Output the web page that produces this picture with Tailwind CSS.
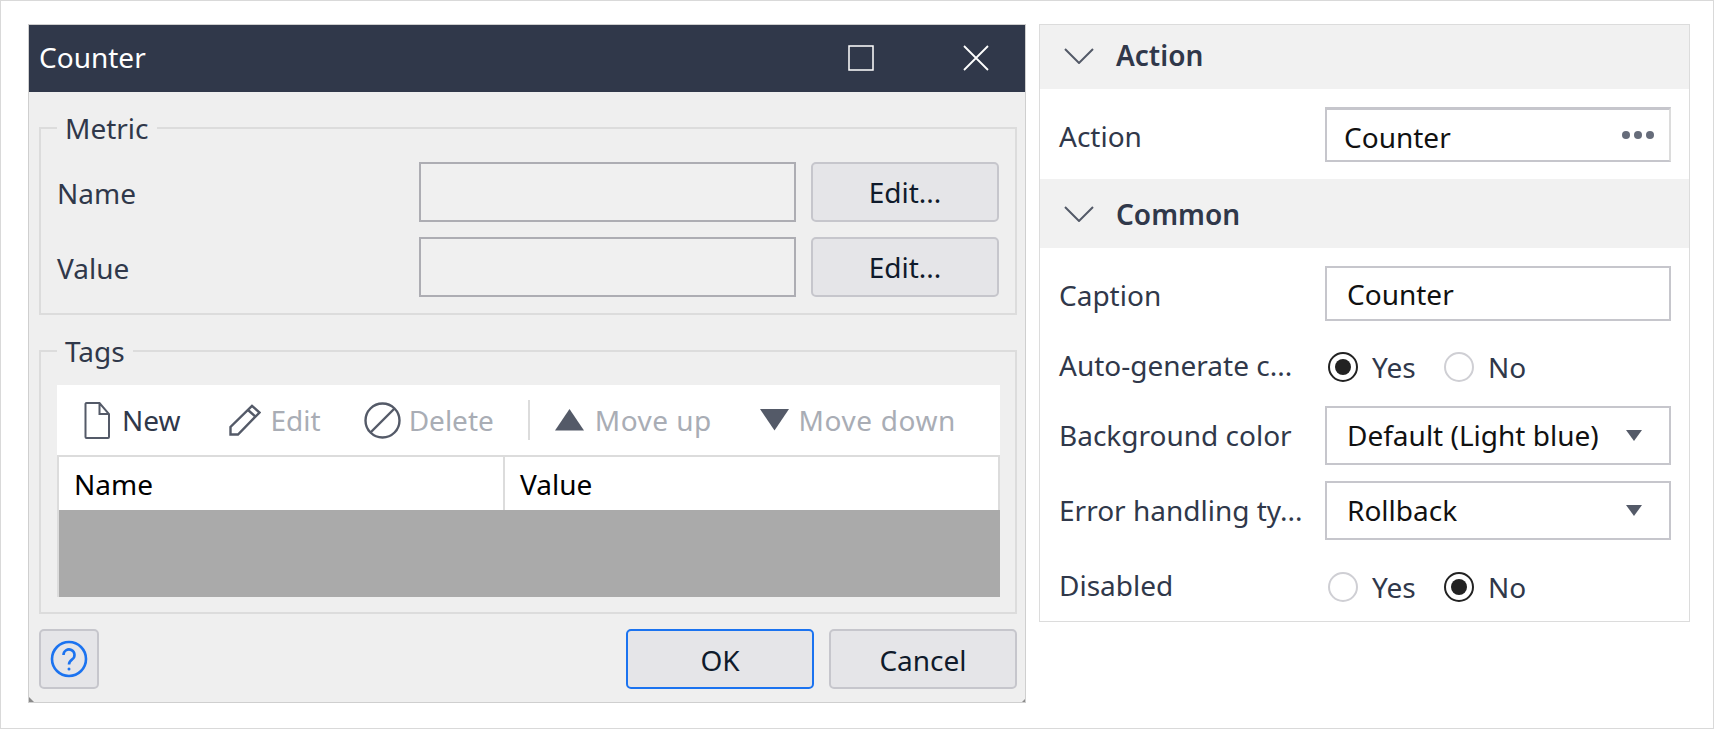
<!DOCTYPE html>
<html lang="en">
<head>
    <meta charset="UTF-8">
    <title>Counter</title>
    <script src="https://cdn.jsdelivr.net/npm/@tailwindcss/browser@4"></script>
</head>
<body class="bg-white">
<div class="w-[1714px] h-[729px] overflow-hidden border border-[#d9d9d9] bg-white flex items-start gap-[13px] pl-[27px] pt-[23px] font-['Noto_Sans',sans-serif] text-[28px] text-[#30384a] leading-[38px]">

    <!-- dialog -->
    <div class="relative w-[998px] h-[679px] shrink-0 border border-[#cfcfcf] bg-[#efefef] flex flex-col">
        <div class="h-[67px] shrink-0 bg-[#30384a] text-white flex items-center pl-[10px]">
            <span class="flex-1 pb-[4px]">Counter</span>
            <svg class="mr-[89px] mb-[2px]" width="26" height="26" viewBox="0 0 26 26" fill="none" stroke="#fff" stroke-width="1.5"><rect x="1" y="1" width="24" height="24"/></svg>
            <svg class="mr-[36px] mb-[2px]" width="26" height="26" viewBox="0 0 26 26" fill="none" stroke="#fff" stroke-width="1.8"><path d="M1 1l24 24M25 1L1 25"/></svg>
        </div>

        <div class="flex-1 flex flex-col pl-[10px] pr-[8px] pt-[17px]">
            <fieldset class="h-[206px] border-2 border-[#dcdcdc] pl-[16px] pr-[16px]">
                <legend class="px-[8px] leading-[38px]">Metric</legend>
                <div class="flex flex-col gap-[15px] pt-[15px]">
                    <div class="flex items-center h-[60px]">
                        <span class="w-[362px] pt-[2px]">Name</span>
                        <div class="w-[377px] h-[60px] border-2 border-[#adadb3] bg-[#f0f0f0]"></div>
                        <button class="ml-[15px] w-[188px] h-[60px] rounded-[5px] border-2 border-[#c6c6cc] bg-[#e5e5e8] text-[#0f1a2b]">Edit...</button>
                    </div>
                    <div class="flex items-center h-[60px]">
                        <span class="w-[362px] pt-[2px]">Value</span>
                        <div class="w-[377px] h-[60px] border-2 border-[#adadb3] bg-[#f0f0f0]"></div>
                        <button class="ml-[15px] w-[188px] h-[60px] rounded-[5px] border-2 border-[#c6c6cc] bg-[#e5e5e8] text-[#0f1a2b]">Edit...</button>
                    </div>
                </div>
            </fieldset>

            <fieldset class="mt-[17px] h-[282px] border-2 border-[#dcdcdc] pl-[16px] pr-[15px]">
                <legend class="px-[8px] leading-[38px]">Tags</legend>
                <div class="mt-[15px]">
                    <div class="h-[70px] bg-white flex items-center pl-[27px] text-[#a9adb5]">
                        <svg width="26" height="37" viewBox="0 0 26 37" fill="none" stroke="#545a68" stroke-width="2"><path d="M2.5 1h13l9.5 11v23a1 1 0 0 1-1 1H2.500a1 1 0 0 1-1-1V2a1 1 0 0 1 1-1zM15.500 1v11H25"/></svg>
                        <span class="ml-[12px] text-[#30384a]">New</span>
                        <svg class="ml-[48px]" width="32" height="32" viewBox="0 0 32 32" fill="none" stroke="#545a68" stroke-width="2.400"><path d="M1.500 30.500v-7.500L23 1.800l7.500 6.700L9 30.500zM19 6l8 7"/></svg>
                        <span class="ml-[10px]">Edit</span>
                        <svg class="ml-[43px]" width="37" height="37" viewBox="0 0 37 37" fill="none" stroke="#545a68" stroke-width="2.400"><circle cx="18.500" cy="18.500" r="17"/><path d="M6.500 30.500l24-24"/></svg>
                        <span class="ml-[8px]">Delete</span>
                        <div class="ml-[34px] w-[2px] h-[40px] bg-[#dcdcdc]"></div>
                        <svg class="ml-[25px]" width="29" height="22" viewBox="0 0 29 22" fill="#545a68"><path d="M14.500 0L29 21.500H0z"/></svg>
                        <span class="ml-[11px] tracking-[0.45px]">Move up</span>
                        <svg class="ml-[48px]" width="29" height="22" viewBox="0 0 29 22" fill="#545a68"><path d="M0 0h29L14.500 21.500z"/></svg>
                        <span class="ml-[10px] tracking-[0.6px]">Move down</span>
                    </div>
                    <div class="border-t-2 border-[#dcdcdc] h-[142px] flex flex-col">
                        <div class="h-[53px] bg-white border-x-2 border-[#dcdcdc] flex items-center text-black">
                            <span class="w-[446px] h-full flex items-center pl-[15px] border-r-2 border-[#dcdcdc]">Name</span>
                            <span class="pl-[15px]">Value</span>
                        </div>
                        <div class="flex-1 bg-[#aaaaaa] border-l-2 border-[#dcdcdc]"></div>
                    </div>
                </div>
            </fieldset>

            <div class="mt-[15px] flex items-center justify-between">
                <button class="w-[60px] h-[60px] rounded-[5px] border-2 border-[#c6c6cc] bg-[#e5e5e8] flex items-center justify-center">
                    <svg width="38" height="38" viewBox="0 0 38 38" fill="none" stroke="#1b73f0" stroke-width="2.600"><circle cx="19" cy="19" r="17"/><path d="M13.500 15a5.500 5.500 0 1 1 8.800 4.300c-2 1.500-3.300 2.400-3.300 5.200"/><circle cx="19" cy="29" r="1.500" fill="#1b73f0" stroke="none"/></svg>
                </button>
                <div class="flex gap-[15px] text-[#0f1a2b]">
                    <button class="w-[188px] h-[60px] pt-[2px] rounded-[5px] border-2 border-[#1b73f0] bg-[#e5e5e8]">OK</button>
                    <button class="w-[188px] h-[60px] pt-[2px] rounded-[5px] border-2 border-[#c6c6cc] bg-[#e5e5e8]">Cancel</button>
                </div>
            </div>
        </div>

        <svg class="absolute left-0 bottom-0" width="5" height="5" viewBox="0 0 5 5" fill="#8a8a8a"><path d="M0 0l5 5H0z"/></svg>
        <svg class="absolute right-0 bottom-0" width="3" height="3" viewBox="0 0 3 3" fill="#8a8a8a"><path d="M3 0v3H0z"/></svg>
    </div>

    <!-- properties -->
    <div class="w-[651px] h-[598px] shrink-0 border border-[#dcdcdc] bg-white flex flex-col">
        <div class="h-[64px] shrink-0 bg-[#f1f1f1] flex items-center pl-[24px] font-semibold">
            <svg class="mb-[2px]" width="30" height="16" viewBox="0 0 30 16" fill="none" stroke="#545a68" stroke-width="2"><path d="M1 1l14 14L29 1"/></svg>
            <span class="ml-[22px] pb-[4px]">Action</span>
        </div>
        <div class="h-[90px] shrink-0 flex items-center pl-[19px]">
            <span class="w-[266px] pt-[4px]">Action</span>
            <div class="relative w-[346px] h-[55px] border-2 border-t-[3px] border-[#c6c6cc] border-r-[#dcdcdc] flex items-center pl-[17px] pt-[5px] text-[#111]">
                Counter
                <div class="absolute right-[15px] top-[21px] flex gap-[4px]">
                    <i class="block w-[8px] h-[8px] rounded-full bg-[#666c7a]"></i>
                    <i class="block w-[8px] h-[8px] rounded-full bg-[#666c7a]"></i>
                    <i class="block w-[8px] h-[8px] rounded-full bg-[#666c7a]"></i>
                </div>
            </div>
        </div>
        <div class="h-[69px] shrink-0 bg-[#f1f1f1] flex items-center pl-[24px] font-semibold">
            <svg width="30" height="16" viewBox="0 0 30 16" fill="none" stroke="#545a68" stroke-width="2"><path d="M1 1l14 14L29 1"/></svg>
            <span class="ml-[22px]">Common</span>
        </div>

        <div class="pl-[19px] pt-[18px] flex flex-col">
            <div class="flex items-center h-[55px]">
                <span class="w-[266px] pt-[2px]">Caption</span>
                <div class="w-[346px] h-[55px] border-2 border-[#c6c6cc] flex items-center pl-[20px] text-[#111]">Counter</div>
            </div>
            <div class="flex items-center h-[85px] pt-[6px]">
                <span class="w-[266px] pb-[4px]">Auto-generate c...</span>
                <div class="flex items-center">
                    <div class="ml-[3px] w-[30px] h-[30px] rounded-full border-2 border-[#222] flex items-center justify-center"><i class="block w-[16px] h-[16px] rounded-full bg-[#222]"></i></div>
                    <span class="ml-[14px] w-[72px]">Yes</span>
                    <div class="w-[30px] h-[30px] rounded-full border-2 border-[#cfcfd4]"></div>
                    <span class="ml-[14px]">No</span>
                </div>
            </div>
            <div class="flex items-center h-[59px]">
                <span class="w-[266px] pb-[2px]">Background color</span>
                <div class="w-[346px] h-[59px] border-2 border-[#c6c6cc] flex items-center justify-between pl-[20px] pr-[27px] text-[#111]">
                    <span class="pb-[2px]">Default (Light blue)</span>
                    <svg width="16" height="11" viewBox="0 0 16 11" fill="#545a68"><path d="M0 0h16L8 11z"/></svg>
                </div>
            </div>
            <div class="flex items-center h-[59px] mt-[16px]">
                <span class="w-[266px] pb-[2px]">Error handling ty...</span>
                <div class="w-[346px] h-[59px] border-2 border-[#c6c6cc] flex items-center justify-between pl-[20px] pr-[27px] text-[#111]">
                    <span class="pb-[2px]">Rollback</span>
                    <svg width="16" height="11" viewBox="0 0 16 11" fill="#545a68"><path d="M0 0h16L8 11z"/></svg>
                </div>
            </div>
            <div class="flex items-center h-[81px] pt-[13px]">
                <span class="w-[266px] pb-[4px]">Disabled</span>
                <div class="flex items-center">
                    <div class="ml-[3px] w-[30px] h-[30px] rounded-full border-2 border-[#cfcfd4]"></div>
                    <span class="ml-[14px] w-[72px]">Yes</span>
                    <div class="w-[30px] h-[30px] rounded-full border-2 border-[#222] flex items-center justify-center"><i class="block w-[16px] h-[16px] rounded-full bg-[#222]"></i></div>
                    <span class="ml-[14px]">No</span>
                </div>
            </div>
        </div>
    </div>
</div>
</body>
</html>
